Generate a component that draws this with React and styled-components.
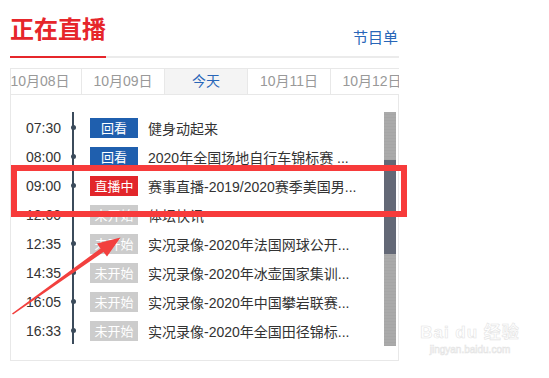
import React from 'react';
import styled, { createGlobalStyle } from 'styled-components';

const GlobalStyle = createGlobalStyle`
    body {
        margin: 0;
        background: #fff;
        font-family: "Liberation Sans", "Noto Sans CJK SC", sans-serif;
    }
`;

const Page = styled.div`
    position: relative;
    width: 549px;
    height: 378px;
    overflow: hidden;
    padding-left: 10px;
    box-sizing: border-box;
`;

const Module = styled.div`
    width: 389px;
`;

const Header = styled.div`
    display: flex;
    justify-content: space-between;
    align-items: flex-end;
    border-bottom: 2px solid #ebebeb;
    margin-top: 15px;
`;

const Title = styled.h2`
    margin: 0 0 -2px;
    padding-bottom: 15px;
    font-family: "Noto Sans CJK SC", sans-serif;
    font-size: 24px;
    line-height: 26px;
    font-weight: bold;
    color: #e6262b;
    border-bottom: 2px solid #e6262b;
`;

const ScheduleLink = styled.a`
    font-family: "Noto Sans CJK SC", sans-serif;
    font-size: 15px;
    line-height: 18px;
    color: #2866b8;
    padding-bottom: 10px;
    padding-right: 1px;
`;

const Tabs = styled.div`
    margin-top: 10px;
    height: 25px;
    border: 1px solid #e8e8e8;
    border-right: none;
    display: flex;
    overflow: hidden;
`;

const TabStrip = styled.div`
    display: flex;
    margin-left: -12px;
`;

const Tab = styled.div`
    flex: 0 0 83px;
    text-align: center;
    font-size: 14px;
    line-height: 25px;
    border-right: 1px solid #e8e8e8;
    box-sizing: border-box;
    color: ${p => (p.$active ? '#2866b8' : '#999')};
    background: ${p => (p.$active ? '#f4f4f4' : '#fff')};
`;

const Panel = styled.div`
    border: 1px solid #e8e8e8;
    border-top: none;
    height: 266px;
    box-sizing: border-box;
    display: flex;
    padding: 17px 2px 14px 0;
`;

const List = styled.div`
    flex: 1;
    overflow: hidden;
`;

const Row = styled.div`
    display: flex;
    align-items: center;
    height: 29px;
    padding-top: 2px;
    box-sizing: border-box;
`;

const Time = styled.span`
    width: 50px;
    text-align: right;
    font-size: 14px;
    color: #333;
`;

const Node = styled.span`
    align-self: stretch;
    width: 24px;
    margin-top: -2px;
    display: flex;
    align-items: center;
    justify-content: center;
    background: linear-gradient(#3b4b5b, #3b4b5b) center / 2px 100% no-repeat;

    &::after {
        content: "";
        width: 5px;
        height: 5px;
        margin-top: 2px;
        border-radius: 50%;
        background: #3b4b5b;
    }
`;

const badgeColors = {
    replay: '#1f5fae',
    live: '#e2262b',
    upcoming: '#cccccc',
};

const Badge = styled.span`
    width: 48px;
    height: 20px;
    margin-left: 5px;
    font-family: "Noto Sans CJK SC", sans-serif;
    font-size: 13px;
    line-height: 20px;
    text-align: center;
    color: #fff;
    background: ${p => badgeColors[p.$kind]};
`;

const ShowName = styled.span`
    margin-left: 10px;
    max-width: 215px;
    font-size: 14px;
    color: #333;
    white-space: nowrap;
    overflow: hidden;
    text-overflow: ellipsis;
`;

const Scrollbar = styled.div`
    width: 12px;
    padding-top: 48px;
    box-sizing: border-box;
    background: repeating-linear-gradient(#aaa 0 2px, #a6a6a6 2px 3px);
`;

const Thumb = styled.div`
    height: 94px;
    background: #636876;
`;

const Highlight = styled.div`
    position: absolute;
    left: 11px;
    top: 165px;
    width: 396px;
    height: 52px;
    border: 6px solid #f73b3b;
    box-sizing: border-box;
`;

const Arrow = styled.svg`
    position: absolute;
    left: 0;
    top: 0;
`;

const Watermark = styled.div`
    position: absolute;
    left: 420px;
    top: 322px;
    width: 100px;
    text-align: center;
    color: #fff;
    -webkit-text-stroke: 0.6px #e4e4e4;
`;

const MarkLogo = styled.div`
    font-size: 17px;
    font-weight: bold;
    line-height: 22px;
    letter-spacing: 1px;
`;

const MarkUrl = styled.div`
    font-size: 10px;
    line-height: 12px;
`;

const dates = [
    { label: '10月08日' },
    { label: '10月09日' },
    { label: '今天', active: true },
    { label: '10月11日' },
    { label: '10月12日' },
];

const shows = [
    { time: '07:30', kind: 'replay', tag: '回看', name: '健身动起来' },
    { time: '08:00', kind: 'replay', tag: '回看', name: '2020年全国场地自行车锦标赛 ...' },
    { time: '09:00', kind: 'live', tag: '直播中', name: '赛事直播-2019/2020赛季美国男...' },
    { time: '12:00', kind: 'upcoming', tag: '未开始', name: '体坛快讯' },
    { time: '12:35', kind: 'upcoming', tag: '未开始', name: '实况录像-2020年法国网球公开...' },
    { time: '14:35', kind: 'upcoming', tag: '未开始', name: '实况录像-2020年冰壶国家集训...' },
    { time: '16:05', kind: 'upcoming', tag: '未开始', name: '实况录像-2020年中国攀岩联赛...' },
    { time: '16:33', kind: 'upcoming', tag: '未开始', name: '实况录像-2020年全国田径锦标...' },
];

export default function App() {
    return (
        <Page>
            <GlobalStyle />
            <Module>
                <Header>
                    <Title>正在直播</Title>
                    <ScheduleLink>节目单</ScheduleLink>
                </Header>
                <Tabs>
                    <TabStrip>
                        {dates.map(d => (
                            <Tab key={d.label} $active={d.active}>{d.label}</Tab>
                        ))}
                    </TabStrip>
                </Tabs>
                <Panel>
                    <List>
                        {shows.map(s => (
                            <Row key={s.time}>
                                <Time>{s.time}</Time>
                                <Node />
                                <Badge $kind={s.kind}>{s.tag}</Badge>
                                <ShowName>{s.name}</ShowName>
                            </Row>
                        ))}
                    </List>
                    <Scrollbar>
                        <Thumb />
                    </Scrollbar>
                </Panel>
            </Module>

            <Highlight />
            <Arrow width="549" height="378" viewBox="0 0 549 378">
                <polygon
                    fill="#f2403e"
                    points="12,313.5 100.5,248.5 97,243.5 120.5,237.5 107,256.5 103.5,252 13,314.5"
                />
            </Arrow>

            <Watermark>
                <MarkLogo>Bai du 经验</MarkLogo>
                <MarkUrl>jingyan.baidu.com</MarkUrl>
            </Watermark>
        </Page>
    );
}
